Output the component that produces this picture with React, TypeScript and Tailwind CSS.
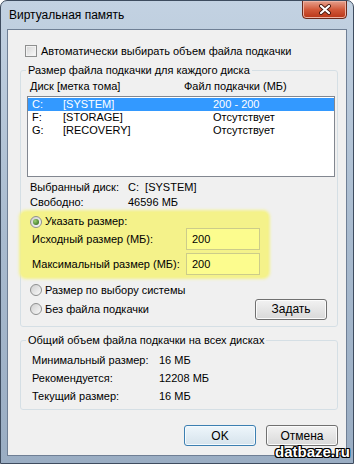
const CheckBox = () => (
  <span className="w-[12px] h-[12px] shrink-0 border border-[#8e8f8f] bg-linear-to-br from-[#d4d4d4] to-[#fbfbfb] shadow-[inset_0_0_0_1px_#f2f2f2]" />
);

const Radio = ({ checked = false }: { checked?: boolean }) => (
  <span className="w-[12px] h-[12px] shrink-0 rounded-full border border-[#8e8f8f] bg-linear-to-br from-[#cfcfcf] to-[#fafafa] flex items-center justify-center">
    {checked && (
      <span className="w-[6px] h-[6px] rounded-full bg-[radial-gradient(circle_at_35%_35%,#9bd36f,#245a14)]" />
    )}
  </span>
);

const WinButton = ({ label, def = false }: { label: string; def?: boolean }) => (
  <button
    className={
      def
        ? "w-[72px] h-[21px] rounded-[3px] border border-[#3c7fb1] bg-linear-to-b from-[#eef6fb] to-[#d6e3ec] shadow-[inset_0_0_0_1px_#f4fafe] text-[12px] leading-none text-black"
        : "w-[72px] h-[21px] rounded-[3px] border border-[#707070] bg-linear-to-b from-[#f2f2f2] to-[#d9d9d9] shadow-[inset_0_0_0_1px_#fbfbfb] text-[12px] leading-none text-black"
    }
  >
    {label}
  </button>
);

const disks = [
  { d: "C:", label: "[SYSTEM]", size: "200 - 200", sel: true },
  { d: "F:", label: "[STORAGE]", size: "Отсутствует", sel: false },
  { d: "G:", label: "[RECOVERY]", size: "Отсутствует", sel: false },
];

export default function App() {
  return (
    <div className="w-[354px] h-[464px] relative flex flex-col border border-[#3e4c5f] rounded-t-[7px] bg-linear-to-b from-[#c3d2e2] via-[#a9bbcf] to-[#9aadc3] font-['Liberation_Sans',Arial,sans-serif] text-[11px] text-black whitespace-nowrap overflow-hidden">
      {/* title bar */}
      <div className="h-[28px] flex items-start shrink-0">
        <span className="self-center pl-[8px] text-[12px] text-black">Виртуальная память</span>
        <div className="ml-auto mr-[6px] -mt-[1px] w-[45px] h-[19px] rounded-b-[4px] border border-[#6b2a1c] bg-linear-to-b from-[#e5a08c] via-[#d2593a] to-[#b83415] shadow-[inset_0_0_0_1px_#eeb2a2] flex items-center justify-center">
          <svg width="14" height="11" viewBox="0 0 14 11">
            <path d="M3 2 L11 9 M11 2 L3 9" stroke="#4a1a10" strokeWidth="4" strokeLinecap="round" />
            <path d="M3 2 L11 9 M11 2 L3 9" stroke="#ffffff" strokeWidth="2.2" strokeLinecap="round" />
          </svg>
        </div>
      </div>

      {/* client area */}
      <div className="flex-1 mx-[6px] mb-[7px] border border-[#6f7f95] bg-[#f0f0f0] flex flex-col">
        <div className="mt-[14px] ml-[17px] h-[14px] flex items-center gap-[4px]">
          <CheckBox />
          <span className="leading-[14px]">Автоматически выбирать объем файла подкачки</span>
        </div>

        <fieldset className="mt-[5px] ml-[12px] mr-[8px] border border-[#d5dfe5] rounded-[3px] pb-[6px] min-w-0">
          <legend className="ml-[5px] px-[2px] leading-[14px]">Размер файла подкачки для каждого диска</legend>
          <div className="mt-[2px] pl-[9px] h-[14px] flex leading-[14px]">
            <span className="w-[154px]">Диск [метка тома]</span>
            <span>Файл подкачки (МБ)</span>
          </div>
          <div className="mt-[3px] ml-[6px] mr-[2px] h-[81px] border border-[#828790] bg-white pt-[1px]">
            {disks.map((r) => (
              <div
                key={r.d}
                className={
                  r.sel
                    ? "h-[13px] flex items-center pl-[4px] leading-[13px] bg-[#3399ff] text-white"
                    : "h-[13px] flex items-center pl-[4px] leading-[13px]"
                }
              >
                <span className="w-[31px]">{r.d}</span>
                <span className="w-[150px]">{r.label}</span>
                <span>{r.size}</span>
              </div>
            ))}
          </div>

          <div className="mt-[3px] pl-[9px] flex leading-[15px]">
            <span className="w-[98px]">Выбранный диск:</span>
            <span>C:&nbsp;&nbsp;[SYSTEM]</span>
          </div>
          <div className="pl-[9px] flex leading-[15px]">
            <span className="w-[98px]">Свободно:</span>
            <span>46596 МБ</span>
          </div>

          <div className="mt-[2px] w-[247px] h-[65px] rounded-[5px] bg-[#f4f28a] shadow-[0_0_3px_2px_#f4f28a] pt-[3px] flex flex-col">
            <div className="h-[13px] pl-[9px] flex items-center gap-[3px]">
              <Radio checked />
              <span className="leading-[13px]">Указать размер:</span>
            </div>
            <div className="h-[22px] pl-[11px] flex items-center">
              <span className="w-[154px]">Исходный размер (МБ):</span>
              <div className="w-[74px] h-[22px] border border-[#cccc8a] bg-[#fcfc8e] flex items-center pl-[5px]">200</div>
            </div>
            <div className="mt-[3px] h-[22px] pl-[11px] flex items-center">
              <span className="w-[154px]">Максимальный размер (МБ):</span>
              <div className="w-[74px] h-[22px] border border-[#cccc8a] bg-[#fcfc8e] flex items-center pl-[5px]">200</div>
            </div>
          </div>

          <div className="mt-[6px] h-[14px] pl-[9px] flex items-center gap-[3px]">
            <Radio />
            <span className="leading-[14px]">Размер по выбору системы</span>
          </div>
          <div className="mt-[1px] h-[22px] pl-[9px] flex items-center gap-[3px]">
            <Radio />
            <span className="leading-[14px]">Без файла подкачки</span>
            <div className="ml-auto mr-[10px]">
              <WinButton label="Задать" />
            </div>
          </div>
        </fieldset>

        <fieldset className="mt-[6px] ml-[12px] mr-[8px] border border-[#d5dfe5] rounded-[3px] pt-[4px] pb-[4px] min-w-0">
          <legend className="ml-[5px] px-[2px] leading-[14px]">Общий объем файла подкачки на всех дисках</legend>
          {[
            ["Минимальный размер:", "16 МБ"],
            ["Рекомендуется:", "12208 МБ"],
            ["Текущий размер:", "16 МБ"],
          ].map(([k, v]) => (
            <div key={k} className="h-[18px] pl-[11px] flex items-center">
              <span className="w-[127px]">{k}</span>
              <span>{v}</span>
            </div>
          ))}
        </fieldset>

        <div className="mt-[15px] mr-[8px] flex justify-end gap-[10px]">
          <WinButton label="OK" def />
          <WinButton label="Отмена" />
        </div>
      </div>

      <span className="absolute right-[3px] bottom-[2px] font-bold text-[15px] leading-[18px] text-white font-['Liberation_Sans',Arial,sans-serif] [text-shadow:1px_1px_0_#000,-1px_-1px_0_#000,1px_-1px_0_#000,-1px_1px_0_#000,0_1px_0_#000,0_-1px_0_#000,1px_0_0_#000,-1px_0_0_#000]">
        datbaze.ru
      </span>
    </div>
  );
}
